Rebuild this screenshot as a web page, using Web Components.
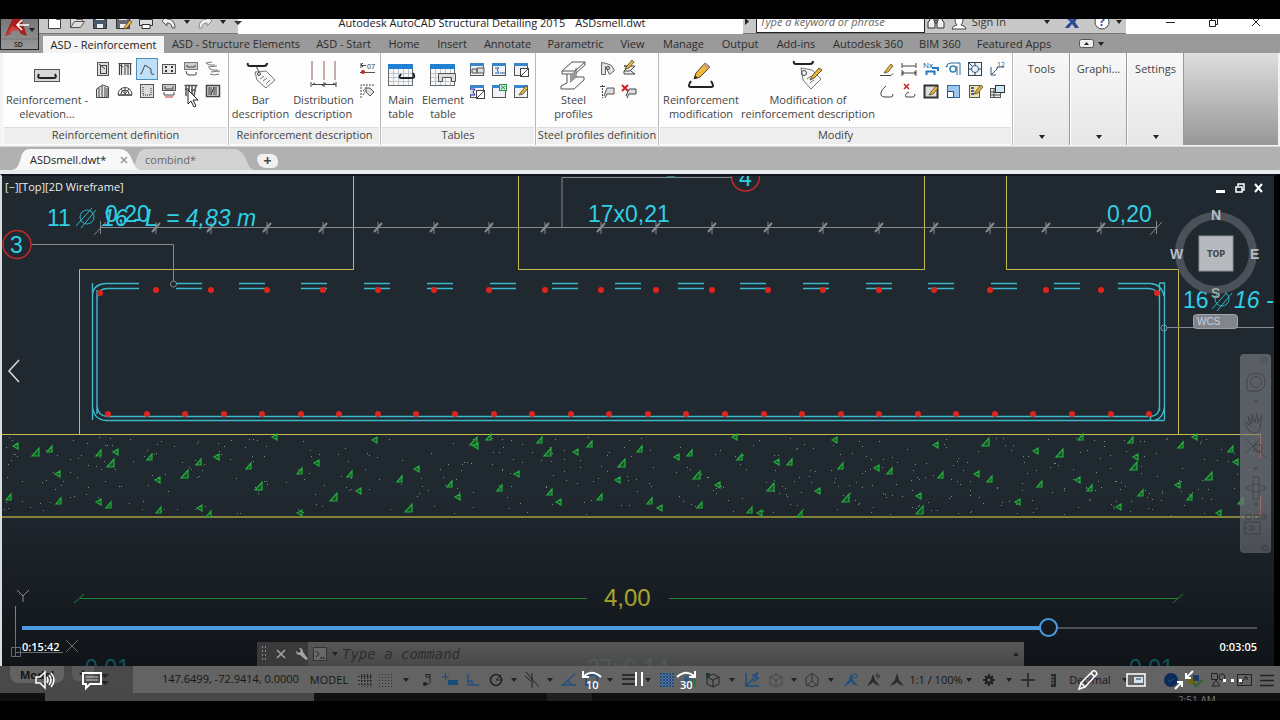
<!DOCTYPE html>
<html lang="en">
<head>
<meta charset="utf-8">
<title>Autodesk AutoCAD Structural Detailing 2015</title>
<style>
body { margin: 0; background: #000; font: 11px/14px "Open Sans", "Noto Sans", sans-serif; color: #333; }
</style>
</head>
<body>
<cad-app></cad-app>
<script>
const define = (name, css, html) => customElements.define(name, class extends HTMLElement {
  constructor() {
    super();
    this.attachShadow({ mode: "open" });
    this.shadowRoot.innerHTML = `<style>*{box-sizing:border-box}button{font:inherit;color:inherit;background:none;border:0;padding:0;margin:0}${css}</style>` +
      (typeof html === "function" ? html(this) : html);
  }
});

/* ---------- icons ---------- */
const K = 'fill="none" stroke="#444" stroke-width="1"';
const pencil = (x, y) => `<path d="M${x} ${y}l2-3 5-6 2 2-5 6z" fill="#e8b640" stroke="#5a4520" stroke-width=".8"/>`;
const table = '<rect x="1.5" y="2.5" width="13" height="12" fill="#eef3f8" stroke="#555"/><path d="M1 2h14v3H1z" fill="#3a86c8"/>';
const icons = {
  column: [16, `<rect x="2.5" y="1.5" width="11" height="13" fill="#ddd" stroke="#555"/><rect x="5.5" y="4.5" width="6" height="8" ${K}/><path d="M4 3l6 5" ${K}/>`],
  wall: [16, `<path d="M1 2h14v12H1z" fill="#e4e4e4"/><path d="M1.5 2.5h13M2.5 2v12M4.5 3v11M8 2v12M11 3v11M13.5 2v12M3 4l3 2M9 4l3 2" ${K}/>`],
  poly: [22, `<rect x=".5" y=".5" width="21" height="21" fill="#bfe0f8" stroke="#4a90b8"/><path d="M4 16q2 0 2-2l3-7 6 4v4q0 2 3 1" ${K}/>`],
  dots4: [16, `<rect x="1.5" y="3.5" width="13" height="9" fill="#e4e4e4" stroke="#555"/><path d="M4 5h2v2H4zM10 5h2v2h-2zM4 9h2v2H4zM10 9h2v2h-2z" fill="#333"/>`],
  beam: [16, `<rect x="1.5" y="1.5" width="13" height="7" fill="#ccc" stroke="#777"/><path d="M4 4q-1 2 1 2h6q2 0 1-2M3 10q0 4 3 4h6q2 0 1-3" ${K}/>`],
  bars3: [16, `<path d="M1 2q2 2 5 2h4M4 7q2 2 4 2h5M3 6l9-1M5 13q4 2 9 0M6 11l9-1M1 2l6-1" fill="none" stroke="#777"/>`],
  tower: [16, `<path d="M1.5 14.5V6l6-4 6 2v10.5z" fill="#e4e4e4" stroke="#444"/><path d="M4 14V5M7 14V3M10 14V4M12 14V5" ${K}/>`],
  dome: [16, `<path d="M1 11.5h14a7 7 0 0 0-14 0zM4 11a4 4 0 0 1 8 0M8 11V5M8 11L4 6M8 11l4-5" ${K}/><path d="M1 11h14v2H1z" fill="#666"/>`],
  ubox: [16, `<rect x="1.5" y="1.5" width="13" height="13" fill="#ddd" stroke="#555"/><path d="M4 4v8h8V4" fill="none" stroke="#222" stroke-dasharray="1 1"/>`],
  pad: [16, `<rect x="1.5" y="1.5" width="13" height="6" fill="#ccc" stroke="#555"/><path d="M4 3v3h8V3M3 9v3h10V9" ${K}/><path d="M4 14h8" stroke="#c33"/>`],
  gen: [16, `<path d="M1.5 2.5h13M3 2v11M6 2v11M9 2v10M13 2l-2 11M2 6h4M8 7h4" fill="none" stroke="#555" stroke-width="1.5"/>`],
  slab: [16, `<rect x="1.5" y="2.5" width="13" height="11" fill="#ddd" stroke="#444" stroke-width="1.5"/><path d="M4 4v8M6 4v8l3-8v8M11 4v8" fill="none" stroke="#333"/>`],
  elev: [28, `<rect x="1.5" y="8.5" width="25" height="12" fill="#d8d8d8" stroke="#555"/><path d="M6 13q-2 4 1 4h14q3 0 1-4" fill="none" stroke="#222" stroke-width="2"/>`],
  tag: [32, `<path d="M3 4q-1 3 2 3h14q3 0 3-3" fill="none" stroke="#222" stroke-width="2"/><path d="M11 7l3 6" stroke="#444"/><path d="M10 13l2 8 9 8 9-8-9-9z" fill="#f8f8f8" stroke="#777"/><circle cx="14" cy="15" r="1.5" ${K}/><path d="M15 20l4-3M18 22l4-3M21 25l4-4" stroke="#777"/>`],
  tagpen: [32, `<path d="M2 2q-1 3 2 3h14q3 0 3-3" fill="none" stroke="#222" stroke-width="2"/><path d="M9 9l2 12 8 9 10-10-9-9z" fill="#f8f8f8" stroke="#777"/><circle cx="12" cy="14" r="2.5" ${K}/><path d="M15 20l4-3M18 24l4-3" stroke="#777"/><path d="M18 21l2-4 7-8 3 2-8 8z" fill="#efb93c" stroke="#5a4520"/>`],
  dist: [32, `<path d="M4 2v19M16 2v19M27 2v19" stroke="#8a5c5c"/><path d="M4 25.5h24M3 23v5M16 23v5M28 23v5M14 27l4-3M4 26l3-2M28 26l-3-2" ${K}/>`],
  d07: [16, `<path d="M1 4.5h5M1 2v5M1 4l2-2M1 4l2 2" ${K}/><text x="7" y="8" font-size="7" fill="#333">07</text><path d="M0 11.5h15" stroke="#555"/><circle cx="3" cy="11" r="2" fill="#c22"/>`],
  dtag: [16, `<path d="M1 15V2h14M3 8l4-5M3 12l3-5" ${K} stroke-dasharray="2 1"/><path d="M6 5v4l4 4 4-4-4-4z" fill="#ddd" stroke="#555"/>`],
  maint: [28, `<rect x="1.5" y="3.5" width="24" height="21" fill="#f6f8fa" stroke="#666"/><path d="M1 3h25v5H1z" fill="#1f7fd0"/><path d="M2 12.5h23M2 16.5h23M2 20.5h23M6.5 8v16M11.5 8v16M16.5 8v16M21.5 8v16" stroke="#bcc5cc" fill="none"/><path d="M14 13q-3 4 0 4h11q4 0 1-5" fill="none" stroke="#222" stroke-width="2"/>`],
  elemt: [28, `<rect x="1.5" y="3.5" width="24" height="21" fill="#f6f8fa" stroke="#666"/><path d="M1 3h25v5H1z" fill="#1f7fd0"/><path d="M2 12.5h23M2 16.5h23M2 20.5h23M6.5 8v16M11.5 8v16M16.5 8v16M21.5 8v16" stroke="#bcc5cc" fill="none"/><path d="M9.5 12.5h17v8h-4v-4h-9v4h-4z" fill="#ddd" stroke="#555"/>`],
  t1: [16, table + `<path d="M3 8h5v4H3zM8 7h7v5H8z" fill="#ddd" stroke="#555"/>`],
  t2: [16, table + `<path d="M4 7h4l-2 2 2 3H4M9 12h5" fill="none" stroke="#2a5fa8"/>`],
  t3: [16, table + `<rect x="7.5" y="7.5" width="8" height="8" fill="#fff" stroke="#444"/><path d="M8 15l7-7" ${K}/>`],
  t4: [16, table + `<path d="M1 6h5L4 9l2 3H1" fill="#dde" stroke="#22a"/><rect x="7.5" y="7.5" width="8" height="8" fill="#fff" stroke="#444"/><path d="M8 15l7-7" ${K}/>`],
  t5: [16, table + `<rect x="8.5" y="1.5" width="7" height="6" fill="#d6efd8" stroke="#2d8a4a"/><path d="M10 3l4 3M14 3l-4 3" stroke="#2d8a4a"/>`],
  t6: [16, table + pencil(6, 12)],
  steel: [32, `<path d="M4 12L14 3h13L17 12zM4 12v3h13v-3M17 15l10-9V3M9 15v9l-6 3v3h13l10-9v-3h-8v-9" fill="#fafafa" stroke="#555"/><path d="M12 15v9l6-5v-7z" fill="#999"/>`],
  s1: [16, `<path d="M2.5 1.5v12h4v-8l4 8 5-4-3-5-5-2z" fill="#e2e2e2" stroke="#666"/><circle cx="9" cy="7" r="1.5" ${K}/>`],
  s2: [16, `<path d="M3 5h11l-5 5H3l5-5zM3 10v3h11l-4-3" fill="#eee" stroke="#444"/>` + pencil(4, 8)],
  s3: [16, `<path d="M1 3.5h5M3.5 2v13" ${K} stroke-dasharray="2 1"/><path d="M5 13l3-8h7v6H8l-2 4" fill="#ddd" stroke="#555"/>`],
  s4: [16, `<path d="M5 13l3-7h7v5H8l-2 4" fill="#ddd" stroke="#444"/><path d="M1 2l6 6M7 2L1 8" stroke="#c22" stroke-width="2"/>`],
  rmod: [32, `<path d="M6 22q-4 6 0 6h20q4 0 0-6" fill="none" stroke="#222" stroke-width="2"/><path d="M9 20l2-6 9-10 5 4-10 10z" fill="#efb93c" stroke="#5a4520"/><path d="M9 20l1-4 3 3z" fill="#333"/><path d="M18 6l5 4 2-2-5-4z" fill="#c98"/>`],
  m1: [16, `<path d="M1 14.5h11l2-2" ${K}/>` + pencil(5, 12)],
  m2: [16, `<path d="M1 2v5M15 2v5M1 5h14M1 9v6M15 9v6M1 12h14M1 12l2-1.5M1 12l2 1.5M15 12l-2-1.5M15 12l-2 1.5" ${K}/>`],
  m3: [16, `<text x="0" y="7" font-size="8" fill="#345">Nx</text><path d="M3.5 14V10.500h8V14M9 7h6v3" fill="none" stroke="#1f78c0" stroke-width="2"/>`],
  m4: [16, `<circle cx="8" cy="8" r="3" fill="none" stroke="#2a86b8" stroke-width="1.5"/><path d="M1 6q1-4 5-4h9v12M12 5v9M1 6l2-1" fill="none" stroke="#2a6c98"/>`],
  m5: [16, `<rect x="1.5" y="1.5" width="13" height="13" fill="#f0f4f8" stroke="#345"/><circle cx="8" cy="8" r="3.5" fill="none" stroke="#2a6c98"/><path d="M8 1v4M8 11v4M1 8h4M11 8h4M2 2l3 3" stroke="#345"/>`],
  m6: [16, `<path d="M2 6v8h5M2 14l6-6V6h7" fill="none" stroke="#357"/><text x="8" y="6" font-size="7" fill="#357">12</text>`],
  m7: [16, `<path d="M7 3Q1 8 2 12q1 2 4 2h6q2 0 2-3" ${K}/>`],
  m8: [16, `<path d="M8 9Q3 11 5 14h7q2 0 2-3" ${K}/><path d="M3 1l5 5M8 1L3 6" stroke="#c22" stroke-width="1.5"/>`],
  m9: [16, `<rect x="1.5" y="2.5" width="13" height="12" fill="#ddd" stroke="#333" stroke-width="2"/>` + pencil(6, 12)],
  m10: [16, `<rect x="2.5" y="2.5" width="12" height="12" fill="#9cc8ee" stroke="#2f6fa8"/><path d="M2.5 8.5h6v6h-6z" fill="#fff" stroke="#1b4f84"/>`],
  m11: [16, `<rect x="2.5" y="2.5" width="10" height="12" fill="#eee0b0" stroke="#555"/><path d="M4 5h3M4 8h3M4 11h3" stroke="#46a" stroke-width="2"/>` + pencil(7, 11)],
  m12: [16, `<rect x="1.5" y="5.5" width="10" height="9" fill="#eee" stroke="#555"/><path d="M2 9h9M2 12h9M5 6v8" ${K}/><rect x="6.5" y="2.5" width="9" height="7" fill="#cfe6f4" stroke="#333"/>`],
  /* quick access */
  new: [16, `<path d="M2.5 1.5h8l4 4v9h-12zM10.5 1.5v4h4" fill="#fff" stroke="#444"/>`],
  open: [16, `<path d="M1.5 13.5v-10h5l1 2h6v2M1.5 13.5l4-6h10l-4 6z" fill="#ddd" stroke="#555"/>`],
  save: [16, `<path d="M1.5 1.5h13v13h-13z" fill="#48586c" stroke="#333"/><path d="M4 2h8v4H4zM5 10h6v4H5z" fill="#eee"/>`],
  saveas: [16, `<path d="M1.5 1.5h13v13h-13z" fill="#667" stroke="#333"/><path d="M4 2h8v4H4zM5 10h6v4H5z" fill="#eee"/>` + pencil(8, 15)],
  print: [16, `<path d="M3.5 5V1.5h9V5M1.5 5.5h13v6h-13z" fill="#ddd" stroke="#333"/><path d="M4 10.5h8v4H4z" fill="#fff" stroke="#333"/>`],
  undo: [16, `<path d="M1 7l5-5v3q8 0 8 9h-3q0-5-5-5v3z" fill="#eee" stroke="#555"/>`],
  redo: [16, `<path d="M15 7l-5-5v3q-8 0-8 9h3q0-5 5-5v3z" fill="#eee" stroke="#888"/>`],
  caret: [8, `<path d="M1 2h6L4 6z" fill="#222"/>`],
  play: [8, `<path d="M2 0v7l4-3.5z" fill="#222"/>`],
  more: [10, `<path d="M1 1.5h8" stroke="#333"/><path d="M1 4h8L5 8z" fill="#333"/>`],
  find: [18, `<path d="M3 3h4v5l1 1v6H1V9l2-2zM11 3h4v4l2 2v6h-7V9l1-1zM8 7h2v3H8z" fill="#eee" stroke="#333"/>`],
  user: [16, `<path d="M1 15q0-3 5-4-2-2-2-5 0-4 4-4t4 4q0 3-2 5 5 1 5 4z" fill="#fff" stroke="#444"/>`],
  exch: [16, `<path d="M1 2h4l3 4 3-4h4l-4 6 4 6h-4L8 10l-3 4H1l4-6z" fill="#2b4a94"/><path d="M2 5l4 3-4 3" fill="none" stroke="#dde"/>`],
  help: [16, `<circle cx="8" cy="8" r="7" fill="#fff" stroke="#444"/><text x="5" y="12" font-size="12" font-weight="700" fill="#2b4a94">?</text>`],
  min: [12, `<path d="M2 6.5h9" stroke="#222"/>`],
  rest: [12, `<path d="M2.5 4.5h6v6h-6zM4.5 4V2.5h6v6H9" fill="none" stroke="#222"/>`],
  close: [12, `<path d="M2 2l8 8M10 2l-8 8" stroke="#222" fill="none"/>`],
  /* status bar */
  grid: [14, `<path d="M0 3.5h14M0 7.5h14M0 11.5h14M3.5 1v13M6.5 1v13M9.5 1v13M12.5 1v13" stroke="#2a2a2a" stroke-dasharray="2 1" fill="none"/>`],
  snap: [14, `<path d="M0 1.5h14M0 4.5h14M0 7.5h14M0 10.5h14M0 13.5h14" stroke="#333" stroke-dasharray="1 2"/>`],
  inf: [14, `<path d="M6 1.5h4v9M6 1v3h4M4 11h5" stroke="#222" fill="none"/><circle cx="5" cy="11" r="2" fill="#222"/>`],
  dyn: [16, `<path d="M0 5h7M3.5 1v8" stroke="#184a7c"/><rect x="6" y="8" width="10" height="5" fill="#184a7c"/>`],
  orth: [14, `<path d="M2 1v11h11M2 8h4v4" stroke="#24507c" fill="none" stroke-width="1.5"/>`],
  polar: [14, `<circle cx="7" cy="7" r="5.5" fill="none" stroke="#222" stroke-width="1.5"/><path d="M7 7h7M7 7l5-5" stroke="#222"/>`],
  iso: [16, `<path d="M2 0l13 15M8 1v15M1 4l6 5" stroke="#222" fill="none"/>`],
  angle: [16, `<path d="M15 13H2L14 2M6 8l5 5" stroke="#24507c" fill="none" stroke-width="1.5"/>`],
  osnap: [16, `<rect x="2" y="3" width="11" height="10" fill="none" stroke="#24507c" stroke-width="2"/>`],
  lwt: [16, `<path d="M1 3h14M1 7h14M1 12h14" stroke="#2b2b2b" stroke-width="2"/>`],
  hatch: [14, `<rect width="14" height="14" fill="#1f4c7c"/><path d="M0 2.5h14M0 5.5h14M0 8.5h14M0 11.5h14M2.5 0v14M5.5 0v14M8.5 0v14M11.5 0v14" stroke="#5d7b99" stroke-dasharray="2 1"/>`],
  cyc: [14, `<path d="M1 3h8v8H1z" fill="#35597c"/><path d="M6 6h7v8H6z" fill="#3c6a4c"/>`],
  cube: [16, `<path d="M8 2l6 3v7l-6 3-6-3V5zM2 5l6 3 6-3M8 8v7" fill="none" stroke="#222"/><rect x="1" y="1" width="4" height="4" fill="#1c3d24"/>`],
  ucs: [16, `<path d="M2 1v13h13M2 14L10 6M8 4l6-3-3 4 3 1-5 4" fill="none" stroke="#1c4c80" stroke-width="1.5"/>`],
  cube2: [16, `<path d="M8 2l6 3v7l-6 3-6-3V5zM2 5l6 3 6-3M8 8v7" fill="none" stroke="#3c3c3c" stroke-dasharray="2 1"/>`],
  gizmo: [16, `<path d="M8 1v8l-6 5M8 9l6 5M8 1l6 5v6l-6 3-6-3V6z" fill="none" stroke="#333"/>`],
  ann: [16, `<path d="M8 1l2 7 5 6-5-2-2-3-2 3-5 2 5-6z" fill="#1c4c80"/><circle cx="12" cy="4" r="2" fill="none" stroke="#1c4c80"/>`],
  ann2: [16, `<path d="M7 2l2 6 5 6-5-2-2-2-2 2-4 2 4-6z" fill="#2a2a2a"/><path d="M12 1l-2 3h4l-3 3" stroke="#2a2a2a" fill="none"/>`],
  ann3: [16, `<path d="M8 1l2 7 5 6-5-2-2-2-2 2-5 2 5-6z" fill="#2a2a2a"/>`],
  gear: [14, `<path d="M7 1v12M1 7h12M3 3l8 8M11 3l-8 8" stroke="#222" stroke-width="2"/><circle cx="7" cy="7" r="4" fill="#222"/><circle cx="7" cy="7" r="1.5" fill="#666"/>`],
  plus: [14, `<path d="M0 7h14M7 0v14" stroke="#222" stroke-width="1.5"/>`],
  ruler: [14, `<path d="M5 1h5v13H5z" fill="#2a2a2a"/><path d="M5 4h3M5 7h3M5 10h3" stroke="#777"/>`],
  disc: [14, `<circle cx="7" cy="7" r="7" fill="#0b2a58"/><path d="M4 7l2 2 4-4" stroke="#1c4c8c" fill="none"/>`],
  layer: [16, `<path d="M1 6h8v6H1z" fill="#6e6418"/><path d="M7 3h6v6H7z" fill="#1c3c64"/><path d="M7 11l3 3 6-6" stroke="#2e5f24" stroke-width="2" fill="none"/>`],
  shapes: [16, `<path d="M1.5 1.5h6v6h-6zM2 14l4-6 4 6z" fill="none" stroke="#222"/><circle cx="12" cy="5" r="3" fill="none" stroke="#222"/>`],
  full: [16, `<rect x="1.5" y="2.5" width="14" height="11" fill="none" stroke="#222"/><path d="M5 10l6-5M8 5h3v3M4 11h3" stroke="#222" fill="none"/>`],
  menu: [14, `<path d="M0 2.5h14M0 7.5h14M0 12.5h14" stroke="#222" stroke-width="1.5"/>`],
  grip: [6, `<path d="M1.5-5v16M4.5-5v16" stroke="#888" stroke-dasharray="2 2"/>`],
  x: [10, `<path d="M1 1l8 8M9 1l-8 8" stroke="#a5a5a5" stroke-width="1.5"/>`],
  wrench: [14, `<path d="M4 1q4 0 4 4l5 7-2 1-6-5q-4 0-4-4l3 2 2-2z" fill="#a5a5a5"/>`],
  prompt: [14, `<rect x=".5" y=".5" width="13" height="13" fill="#686868" stroke="#333"/><path d="M3 4l3 3-3 3M7 11h5" stroke="#222" fill="none"/>`],
  /* player */
  chev: [24, `<path d="M17 1L7 12l10 11" fill="none" stroke="#d8dce0" stroke-width="1.5"/>`],
  vol: [20, `<path d="M1 7h4l5-5v16l-5-5H1z" fill="none" stroke="#fff" stroke-width="1.5"/><path d="M12 7q2 3 0 6M14 5q4 5 0 10M16 3q6 7 0 14" fill="none" stroke="#fff" stroke-width="1.5"/>`],
  cc: [20, `<path d="M1 3h18v11H8l-4 4v-4H1z" fill="none" stroke="#fff" stroke-width="2"/><path d="M4 7h12M4 10h12" stroke="#ccc"/>`],
  b10: [22, `<path d="M3 7Q11 0 20 8" fill="none" stroke="#fff" stroke-width="2"/><path d="M2 2v6h6" fill="none" stroke="#fff" stroke-width="2"/><text x="5" y="20" font-size="11" font-weight="600" fill="#fff">10</text>`],
  pause: [20, `<path d="M7 3v14M13 3v14" stroke="#fff" stroke-width="2"/>`],
  f30: [22, `<path d="M19 7Q11 0 2 8" fill="none" stroke="#fff" stroke-width="2"/><path d="M20 2v6h-6" fill="none" stroke="#fff" stroke-width="2"/><text x="5" y="20" font-size="11" font-weight="600" fill="#fff">30</text>`],
  pen: [20, `<path d="M1 19l2-6L15 1q3-1 4 3L7 17zM3 13l4 4M13 3l4 4" fill="none" stroke="#fff" stroke-width="1.5"/>`],
  pip: [20, `<path d="M1 4h18v12H1z" fill="none" stroke="#fff" stroke-width="1.5"/><path d="M8 7h9v6H8z" fill="#cfe3f4"/><path d="M10 9h5" stroke="#234"/>`],
  shrink: [20, `<path d="M19 1l-7 7M12 3v5h5M1 19l7-7M3 12h5v5" fill="none" stroke="#fff" stroke-width="2"/>`],
  dots: [20, `<path d="M1 9h3v3H1zM9 9h3v3H9zM17 9h3v3h-3z" fill="#fff"/>`]
};
define("cad-icon", ":host{display:inline-flex;flex:none}svg{display:block;overflow:visible}", el => {
  const [s, body] = icons[el.getAttribute("name")];
  return `<svg width="${s}" height="${s}" viewBox="0 0 ${s} ${s}" aria-hidden="true">${body}</svg>`;
});
const I = n => `<cad-icon name="${n}"></cad-icon>`;

/* ---------- title bar ---------- */
define("title-bar", `
:host{display:flex;flex-direction:column;justify-content:flex-end;height:15px;overflow:hidden;background:#fff}
.row{display:grid;grid-template-columns:238px 1fr auto 154px;height:24px;flex:none}
.qat,.info{display:flex;align-items:center;background:#c8c8c8;border-bottom:1px solid #777}
.qat{padding:1px 0 0 46px;gap:7px}.qat button{display:flex}.qat button:nth-child(n+7){margin-left:-1px}
.title{display:flex;align-items:center;justify-content:center;gap:10px;font-size:11px;color:#222;padding:1px 0 0 3px;min-width:0;white-space:nowrap}
.info{width:383px}.info button{display:flex;align-items:center;gap:5px}
input{width:169px;height:23px;margin:0 2px 0 5px;padding:0 3px;border:1px solid #222;background:#fff;font:italic 11px/14px "Open Sans",sans-serif;color:#555}
input::placeholder{color:#666}
.sp{flex:1}.win{display:flex;align-items:center;justify-content:space-between;padding:0 18px 0 38px}.win button{display:flex}`,
`<div class="row"><div class="qat">${["new","open","save","saveas","print","undo","caret","redo","caret","more"].map(n=>`<button aria-label="${n}">${I(n)}</button>`).join("")}</div>
<div class="title"><span>Autodesk AutoCAD Structural Detailing 2015</span><span>ASDsmell.dwt</span></div>
<div class="info"><button aria-label="Show">${I("play")}</button><input aria-label="Search" placeholder="Type a keyword or phrase"><button aria-label="Find">${I("find")}</button>&nbsp;&nbsp;<button>${I("user")}Sign In</button><span class="sp"></span><button aria-label="Exchange">${I("caret")}&nbsp;${I("exch")}</button>&nbsp;&nbsp;&nbsp;&nbsp;&nbsp;<button aria-label="Help">${I("help")}${I("caret")}</button>&nbsp;</div>
<div class="win"><button aria-label="Minimize">${I("min")}</button><button aria-label="Restore">${I("rest")}</button><button aria-label="Close">${I("close")}</button></div></div>`);

define("app-button", `
:host{display:block;position:absolute;left:0;top:0;width:39px;height:31px;overflow:hidden;background:linear-gradient(#777,#999);border:1px solid #222;border-top:0;box-sizing:border-box}
button{display:block;width:100%;height:100%}svg{display:block}`,
`<button aria-label="Application menu"><svg width="38" height="30" viewBox="0 0 38 30"><path d="M4 17L13-4h6l7 21-6-2-3-5-6 1-2 4z" fill="#a81f1c"/><path d="M4 17l7-10 8 4-8 1z" fill="#d4423a"/><path d="M28 6H17M21 1l-5 5 5 5" fill="none" stroke="#fff" stroke-width="1.5"/><path d="M28 9h6l-3 4z" fill="#222"/><path d="M1 20h36" stroke="#777"/><text x="13" y="28" font-size="7" font-weight="600" fill="#222">SD</text></svg></button>`);

/* ---------- ribbon ---------- */
const tabs = [["ASD - Reinforcement",121],["ASD - Structure Elements",144],["ASD - Start",71],["Home",50],["Insert",46],["Annotate",65],["Parametric",71],["View",43],["Manage",59],["Output",54],["Add-ins",58],["Autodesk 360",86],["BIM 360",58],["Featured Apps",90]];
define("ribbon-tabs", `
:host{display:flex;height:19px;padding-left:43px;background:#9a9a9a;align-items:stretch}
button{flex:none;white-space:nowrap;line-height:19px;color:#2c2c2c}
button[aria-selected=true]{background:#f4f4f4;color:#222;margin-top:2px;line-height:17px}
.tog{display:flex;align-items:center;gap:3px;padding-left:20px}
.tog svg{display:block}`,
`${tabs.map(([t,w],i)=>`<button role="tab" aria-selected="${!i}" style="width:${w}px">${t}</button>`).join("")}<button class="tog" aria-label="Ribbon display"><svg width="15" height="9" viewBox="0 0 15 9"><rect x=".5" y=".5" width="14" height="8" rx="2" fill="#eee" stroke="#555"/><path d="M5 6h5L7.5 3z" fill="#222"/></svg>${I("caret")}</button>`);

define("ribbon-button", `
:host{display:block;flex:none}
button{display:flex;flex-direction:column;align-items:center;width:100%;text-align:center;color:#444}
.i{height:36px;display:flex;align-items:center;margin:4px 0 0}
.t{margin:0 -8px;white-space:pre}`,
el => `<button><span class="i">${I(el.getAttribute("icon"))}</span><span class="t"><slot></slot></span></button>`);

define("icon-grid", `
:host{display:grid;grid-auto-rows:22px;grid-template-columns:repeat(var(--cols),22px);margin:5px 0 0 var(--gap,1px);align-content:start}
button{display:grid;place-items:center;width:22px;height:22px}`,
el => el.getAttribute("icons").split(" ").map(n => `<button aria-label="${n}">${I(n)}</button>`).join(""));

define("ribbon-panel", `
:host{display:flex;flex-direction:column;flex:none;background:#fdfdfd;border-right:1px solid #b8b8b8;box-sizing:border-box}
.c{display:flex;flex:1}
.l{margin:0 1px 1px;height:17px;line-height:14px;text-align:center;background:#eeeeee;border-top:1px solid #ddd;color:#444}`,
el => `<div class="c"><slot></slot></div><div class="l">${el.getAttribute("label")}</div>`);

define("folded-panel", `
:host{display:block;flex:none;border-right:1px solid #999;border-left:1px solid #fff;background:linear-gradient(#f8f8f8,#e6e6e6);box-sizing:border-box}
button{display:flex;flex-direction:column;justify-content:space-between;align-items:center;width:100%;height:100%;padding:9px 0 4px;color:#444}`,
`<button><span><slot></slot></span>${I("caret")}</button>`);

define("ribbon-body", `
:host{display:flex;position:relative;height:93px;padding:0 2px 1px 3px;background:#f4f4f4;overflow:hidden}
.fill{flex:1;background:linear-gradient(#dedede,#979797)}
.first{margin-left:15px}
.cur{position:absolute;left:187px;top:36px}`,
`<ribbon-panel label="Reinforcement definition" style="width:226px"><ribbon-button icon="elev" style="width:88px">Reinforcement -
elevation...</ribbon-button><icon-grid style="--cols:6" icons="column wall poly dots4 beam bars3 tower dome ubox pad gen slab"></icon-grid></ribbon-panel>
<ribbon-panel label="Reinforcement description" style="width:152px"><ribbon-button icon="tag" style="width:63px">Bar
description</ribbon-button><ribbon-button icon="dist" style="width:63px">Distribution
description</ribbon-button><icon-grid style="--cols:1;--gap:2px" icons="d07 dtag"></icon-grid></ribbon-panel>
<ribbon-panel label="Tables" style="width:155px"><ribbon-button icon="maint" style="width:40px">Main
table</ribbon-button><ribbon-button icon="elemt" style="width:44px">Element
table</ribbon-button><icon-grid style="--cols:3" icons="t1 t2 t3 t4 t5 t6"></icon-grid></ribbon-panel>
<ribbon-panel label="Steel profiles definition" style="width:123px"><ribbon-button class="first" icon="steel" style="width:45px">Steel
profiles</ribbon-button><icon-grid style="--cols:2;--gap:0px" icons="s1 s2 s3 s4"></icon-grid></ribbon-panel>
<ribbon-panel label="Modify" style="width:354px"><ribbon-button icon="rmod" style="width:84px">Reinforcement
modification</ribbon-button><ribbon-button icon="tagpen" style="width:130px">Modification of
reinforcement description</ribbon-button><icon-grid style="--cols:6;--gap:3px" icons="m1 m2 m3 m4 m5 m6 m7 m8 m9 m10 m11 m12"></icon-grid></ribbon-panel>
<folded-panel style="width:57px">Tools</folded-panel><folded-panel style="width:57px">Graphi...</folded-panel><folded-panel style="width:57px">Settings</folded-panel><div class="fill"></div>
<svg class="cur" width="13" height="19" viewBox="0 0 13 19"><path d="M1 1v14l3-3 3 6 2-1-3-6h5z" fill="#fff" stroke="#222"/></svg>`);

/* ---------- drawing tabs ---------- */
define("doc-tab", `
:host{display:block;position:relative;height:21px;flex:none}
svg{position:absolute;inset:0;width:100%;height:100%}
button{position:relative;display:flex;align-items:center;width:100%;height:100%;white-space:nowrap;color:inherit}`,
el => { const w = parseInt(el.style.width);
  return `<svg preserveAspectRatio="none" viewBox="0 0 ${w} 20"><path d="M0 20Q6 20 9 8 11 0 18 0H${w-20}Q${w-12} 0 ${w-8} 10 ${w-4} 20 ${w} 20Z" fill="${el.getAttribute("fill")}"/></svg><button><slot></slot></button>`; });
define("doc-tabs", `
:host{display:flex;align-items:flex-end;height:24px;padding-left:12px;background:#b1b1b1;border-top:1px solid #d8d8d8}
.a{z-index:1}.a span{padding-left:18px;color:#222}.a svg.x{margin-left:14px}
.b{margin-left:-12px;color:#666}.b span{padding-left:17px}
.n{display:grid;place-items:center;width:21px;height:14px;margin:0 0 2px 3px;background:#f0f0f0;border-radius:5px 7px 5px 9px;font:700 14px/12px "Open Sans",sans-serif;color:#444}`,
`<doc-tab class="a" fill="#f8f8f8" style="width:128px"><span>ASDsmell.dwt*</span><svg class="x" width="8" height="8" viewBox="0 0 8 8"><path d="M1 1l6 6M7 1L1 7" stroke="#999" stroke-width="1.5"/></svg></doc-tab><doc-tab class="b" fill="#d2d2d2" style="width:126px"><span>combind*</span></doc-tab><button class="n" aria-label="New drawing">+</button>`);

/* ---------- model space ---------- */
const seq = (n, f) => Array.from({ length: n }, (_, i) => f(i)).join("");
const ups = "50,449 99,453 9,497 59,501 109,505 150,457 199,462 159,510 209,514 249,466 300,471 350,474 400,479 450,484 489,437 500,488 540,440 590,444 550,492 600,497 640,449 650,501 690,453 700,505 740,457 750,510 790,462 800,514 841,466 890,471 941,475 990,479 1040,484 1081,437 1090,488 1131,440 1141,493 1181,445 1190,497 1231,449 1241,501".split(" ");
const bigs = "36,452 111,463 185,474 259,486 334,497 409,508 474,441 548,452 622,463 697,475 771,487 846,498 920,510 986,442 1060,453 1134,466 1209,476".split(" ");
const lefts = "16,446 116,452 58,474 99,502 158,480 217,457 200,508 275,437 300,513 317,463 359,491 375,440 417,469 458,497 476,446 517,474 576,452 559,502 618,480 660,508 677,457 718,485 735,437 760,513 777,462 818,491 835,440 877,468 919,496 936,445 977,474 1018,502 1036,451 1078,480 1119,507 1136,457 1178,485 1195,437 1219,513 1236,462".split(" ");
const tri = (list, d) => list.map(p => `M${p}${d}`).join("");
let seed = 7;
const rnd = () => (seed = (seed * 16807) % 2147483647) / 2147483647;
const speck = seq(480, () => `M${Math.round(4 + rnd() * 1254)} ${Math.round(437 + rnd() * 78)}.5h1`);
const tickX = i => Math.round(100 + i * 55.63);
define("model-space", `
:host{display:block;position:relative;background:#202830;border-top:2px solid #10161c;border-left:2px solid #dcdcdc;border-right:6px solid #000;box-sizing:border-box;overflow:hidden}
svg.d{display:block;width:100%;font-family:"Liberation Sans",Arial,sans-serif}`,
`<svg class="d" viewBox="2 176 1272 490" role="img" aria-label="Footing reinforcement section">
<g fill="none" stroke="#c3bb4c"><path d="M353.5 174v95.5h-274V434M518.5 174v95.5h406V174M1006.5 174v95.5h172V434M2 434.5h1259"/><path d="M2 517h1259" stroke="#b3aa44" stroke-width="1.5"/></g>
<path d="M1260.5 434v24M1260.5 496v20" stroke="#e04848"/>
<path d="${speck}" stroke="#768d88"/>
<g fill="#1a7a2c" fill-opacity=".5" stroke="#23b03c" stroke-width="1.2"><path d="${tri(ups,"m2-3v6h-5z")}"/><path d="${tri(bigs,"m3-4v8h-7z")}"/><path d="${tri(lefts,"m-3 0l5-3v6z")}"/></g>
<g stroke="#858a90" fill="none"><path d="M100 227.5h1057"/><path d="${seq(18,i=>`M${tickX(i+1)} 222v12`)}"/><path d="M100.5 221v13M1156.5 221v13M94 235l12-13M1150 235l12-13"/><path stroke-width="2" d="${seq(18,i=>`M${tickX(i+1)-4} 232l8-9`)}"/>
<path d="M31 244.5h142.5V281M731 177.5H562V227M1167 327.5h107"/><circle cx="173.5" cy="284" r="3"/><circle cx="1164" cy="328" r="3"/></g>
<g fill="none" stroke="#3bb8cc" stroke-width="1.4"><path d="M92.5 283v137M97 290v124M92.5 296q0-12 14-12.5H139M97 300q0-11 10-11.5h32M92.5 406q1 14 14 14.5h1058M97 406q1 10 10 10.5h1043M1159.5 283v128M1164.5 420V283h-5M1159.5 406q0 10-9 10.5v4M1164.5 406q-1 12-9 14M1118 283.5h33q11 1 13 13M1118 288.5h31q9 1 10 8"/>
<path d="${seq(15,i=>`M${Math.round(176+i*62.7)} 283.5h26M${Math.round(176+i*62.7)} 288.5h26`)}"/></g>
<g fill="#e0241c">${seq(20,i=>`<circle cx="${tickX(i)}" cy="${i%19?290:293}" r="3"/>`)}${seq(28,i=>`<circle cx="${Math.round(108+i*38.56)}" cy="414" r="3"/>`)}</g>
<g fill="none" stroke="#c22a2a" stroke-width="1.5"><circle cx="17" cy="244.5" r="14"/><circle cx="745.5" cy="177" r="14"/></g>
<g fill="#2fcfe4" font-size="23"><text x="10" y="253">3</text><text x="739" y="186">4</text><path d="M667 174h8v2.500h-8z"/>
<text x="47" y="226">11</text><text x="102" y="226" font-style="italic">16</text><text x="133" y="226" font-style="italic">-</text><text x="145" y="226" font-style="italic">L</text><text x="166" y="226" font-style="italic">= 4,83 m</text><text x="105" y="222">0,20</text><text x="588" y="222">17x0,21</text><text x="1107" y="222">0,20</text><text x="1183" y="308">16</text><text x="1234" y="308" font-style="italic">16 -</text></g>
<g fill="none" stroke="#2fb6c8"><circle cx="87" cy="217" r="7"/><path d="M76 226l16-18M81 228l15-18"/><circle cx="1222" cy="299" r="7"/><path d="M1212 309l16-18M1217 311l15-18"/></g>
<g fill="none" stroke="#2fbe46"><path d="M80 598.5h507M669 598.5h509M74 603l10-9M1173 603l10-9"/></g>
<text x="604" y="606" font-size="24" fill="#eee83c">4,00</text>
<g fill="#1fa4ac" font-size="23"><text x="85" y="676">0,01</text><text x="587" y="676" fill="#8ff">27x0,14</text><text x="1129" y="676">0,01</text></g>
<g fill="none" stroke="#c0c6cc"><path d="M17 590l6 6 6-6M23 596v6M15.5 606v50M11.5 647.5h9v9h-9zM15 652.5h48M66 640l12 12M78 640l-12 12"/></g>
</svg><slot></slot>`);

define("view-cube", `
:host{display:block;position:absolute;right:12px;top:30px}svg{display:block}`,
`<svg width="96" height="125" viewBox="0 0 96 125" font-weight="700" font-family="Liberation Sans,Arial,sans-serif"><circle cx="50" cy="47" r="37" fill="none" stroke="#4b5158" stroke-width="8"/><rect x="33" y="30" width="34" height="35" fill="#b6b9bd" stroke="#8c8f94"/><text x="41" y="51" font-size="8" font-family="DejaVu Sans,sans-serif" fill="#444">TOP</text><g fill="#b9bcc2" font-size="14"><text x="45" y="14">N</text><text x="4" y="53">W</text><text x="84" y="53">E</text><text x="45" y="92" fill="#9aa">S</text></g><rect x="27.5" y="108.5" width="44" height="14" rx="3" fill="#81868d" stroke="#a0a4aa"/><text x="31" y="119" font-size="10" font-weight="400" fill="#ccd">WCS</text></svg>`);

define("window-buttons", `
:host{position:absolute;right:10px;top:6px;display:flex;gap:9px}button{display:flex}`,
`<button aria-label="Minimize"><svg width="10" height="12"><path d="M0 8h9v3H0z" fill="#fff"/></svg></button><button aria-label="Restore"><svg width="10" height="12"><path d="M1 5h6v5H1zM3 4V2h6v6H7" fill="none" stroke="#fff" stroke-width="1.5"/></svg></button><button aria-label="Close"><svg width="10" height="12"><path d="M1 2l7 8M8 2l-7 8" stroke="#fff" stroke-width="2"/></svg></button>`);

define("nav-bar", `
:host{position:absolute;right:3px;top:178px;width:31px;height:199px;box-sizing:border-box;border-radius:4px;background:#7d8085a0;border:1px solid #62666c80}svg{display:block}`,
`<svg width="29" height="197" viewBox="0 0 29 197" fill="none" stroke="#43474d"><circle cx="23" cy="5" r="2.5"/><path d="M6 34V27q0-9 9-9t9 9-9 9H7z"/><circle cx="15" cy="27" r="5.5"/><path d="M13 47h4l-2-2z"/><path d="M8 76q-4-7-3-9l4 4-2-10 4 8V59l3 9 2-10 1 10 4-8-2 13q-2 6-6 5z"/><path d="M5 84l14 14M19 84L5 98M18 96l8 8"/><circle cx="17" cy="93" r="4"/><path d="M13 113h4l-2 2z"/><path d="M12 122h6v22h-6zM5 133q10-7 20 0-10 7-20 0"/><path d="M13 149h4l-2 2zM5 160h5v4H5zM13 160h5v4h-5zM20 160h5v4h-5zM4 167h15v12H4zM9 170v6l5-3z"/><circle cx="24" cy="193" r="2.5"/></svg>`);

define("command-line", `
:host{position:absolute;left:255px;right:250px;bottom:0;height:24px;display:flex;align-items:center;background:linear-gradient(#606060e0,#505050e0)}
.h{display:flex;align-items:center;gap:9px;width:51px;height:100%;padding-left:4px;background:#3a3a3a}
.h button,.p{display:flex;align-items:center}.p{gap:4px;padding-left:5px}
input{flex:1;min-width:0;height:22px;margin-left:3px;padding:0;border:0;background:none;font:italic 14px/20px "DejaVu Sans Mono",monospace;color:#222}
input::placeholder{color:#2d2d2d;opacity:1}
.u{padding:0 4px}.u cad-icon{transform:rotate(180deg)}`,
`<div class="h">${I("grip")}<button aria-label="Close">${I("x")}</button><button aria-label="Customize">${I("wrench")}</button></div><button class="p" aria-label="Recent commands">${I("prompt")}${I("caret")}</button><input aria-label="Command" placeholder="Type a command"><button class="u" aria-label="History">${I("caret")}</button>`);

/* ---------- status bar ---------- */
const st = "grid:20 snap:22 caret:18 inf:24 dyn:22 orth:24 polar:22 caret:14 iso:22 caret:14 angle:24 osnap:22 caret:14 lwt:24 caret:14 hatch:24 cyc:22 cube:24 caret:14 ucs:26 cube2:22 caret:14 gizmo:22 caret:16 ann:24 ann2:22 ann3:24 =1:1_/_100%:54 caret:12 gear:28 caret:12 plus:26 ruler:24 =Decimal:50 caret:20 gap:26 disc:20 layer:26 shapes:22 full:30 menu:16".split(" ");
define("status-bar", `
:host{display:flex;height:27px;background:#636363;color:#161616;align-items:stretch}
.l{display:flex;width:133px;background:#494949;padding-left:10px;flex:none}
.m{width:54px;height:17px;line-height:17px;text-align:center;font-weight:700;background:#636363;border-radius:0 0 8px 8px;margin-right:8px}
.p{width:22px;height:15px;background:#5a5a5a;border-radius:0 0 6px 6px;line-height:12px;font-size:14px;font-weight:700;text-align:center}
.q{width:22px;display:grid;place-items:center}
.c{padding-left:29px;width:174px;line-height:26px;white-space:nowrap;flex:none}.c+button{width:44px;margin-right:4px;flex:none}
.i{display:grid;place-items:center;flex:none;white-space:nowrap}`,
`<div class="l"><button class="m">Model</button><button class="p" aria-label="New layout">+</button><span class="q"><svg width="10" height="14"><path d="M1 1h8L5 5zM1 8h8l-4 4z" fill="#222"/></svg></span></div><span class="c">147.6499, -72.9414, 0.0000</span><button>MODEL</button>` +
st.map(s => { const k = s.lastIndexOf(":"), n = s.slice(0, k), w = s.slice(k + 1);
  return n === "gap" ? `<span style="width:${w}px"></span>` : `<button class="i" style="width:${w}px"${n[0] === "=" ? ">" + n.slice(1).replaceAll("_", " ") : ` aria-label="${n}">` + I(n)}</button>`; }).join(""));

define("task-strip", `
:host{display:grid;grid-template-columns:45px 269px 233px 45px 1fr 102px;height:8px;background:#101010;overflow:hidden;color:#777}
.a{background:#484848}.b{background:#202020}.t{font-size:10px;line-height:14px}`,
`<i></i><i class="a"></i><i></i><i class="b"></i><i></i><span class="t">2:51 AM</span>`);

/* ---------- video player ---------- */
define("player-controls", `
:host{position:absolute;left:0;right:0;bottom:9px;height:74px;color:#fff;display:block;font-weight:600}
input{appearance:none;-webkit-appearance:none;display:block;width:calc(100% - 45px);height:19px;margin:0 0 0 22px;background:none}
input::-webkit-slider-runnable-track{height:19px;background:linear-gradient(#4a9be0,#4a9be0) 0 50%/83% 4px no-repeat,linear-gradient(#4b5058,#4b5058) 0 50%/100% 2px no-repeat}
input::-webkit-slider-thumb{-webkit-appearance:none;width:19px;height:19px;box-sizing:border-box;border-radius:50%;border:2px solid #4a9be0;background:#14191f}
.t{display:flex;justify-content:space-between;padding:3px 23px 0 22px}
.g{display:grid;grid-template-columns:1fr auto 1fr;align-items:center;height:27px;margin-top:12px;padding:0 38px 0 35px}
.g div{display:flex;gap:27px}.g div+div{gap:26px}.g div:last-child{justify-content:flex-end;gap:28px}button{display:flex}`,
`<input type="range" aria-label="Position" min="0" max="1127" value="943"><div class="t"><span>0:15:42</span><span>0:03:05</span></div>
<div class="g">${[["vol","cc"],["b10","pause","f30"],["pen","pip","shrink","dots"]].map(g=>`<div>${g.map(n=>`<button aria-label="${n}">${I(n)}</button>`).join("")}</div>`).join("")}</div>`);

define("cad-app", `
:host{display:block;padding:19px 0}
main{position:relative}
.light{height:4px;background:#e9ecee}
.view{position:absolute;left:3px;top:4px;color:#eee}
.shade{position:absolute;inset:auto 0 0;height:170px;background:linear-gradient(transparent,rgba(0,0,0,.5))}
.prev{position:absolute;left:2px;top:340px}`,
`<main><title-bar></title-bar><ribbon-tabs></ribbon-tabs><ribbon-body></ribbon-body><doc-tabs></doc-tabs><div class="light"></div>
<model-space><span class="view">[−][Top][2D Wireframe]</span><window-buttons></window-buttons><view-cube></view-cube><nav-bar></nav-bar><div class="shade"></div><command-line></command-line></model-space>
<status-bar></status-bar><task-strip></task-strip><app-button></app-button><button class="prev" aria-label="Previous">${I("chev")}</button><player-controls></player-controls></main>`);
</script>
</body>
</html>
